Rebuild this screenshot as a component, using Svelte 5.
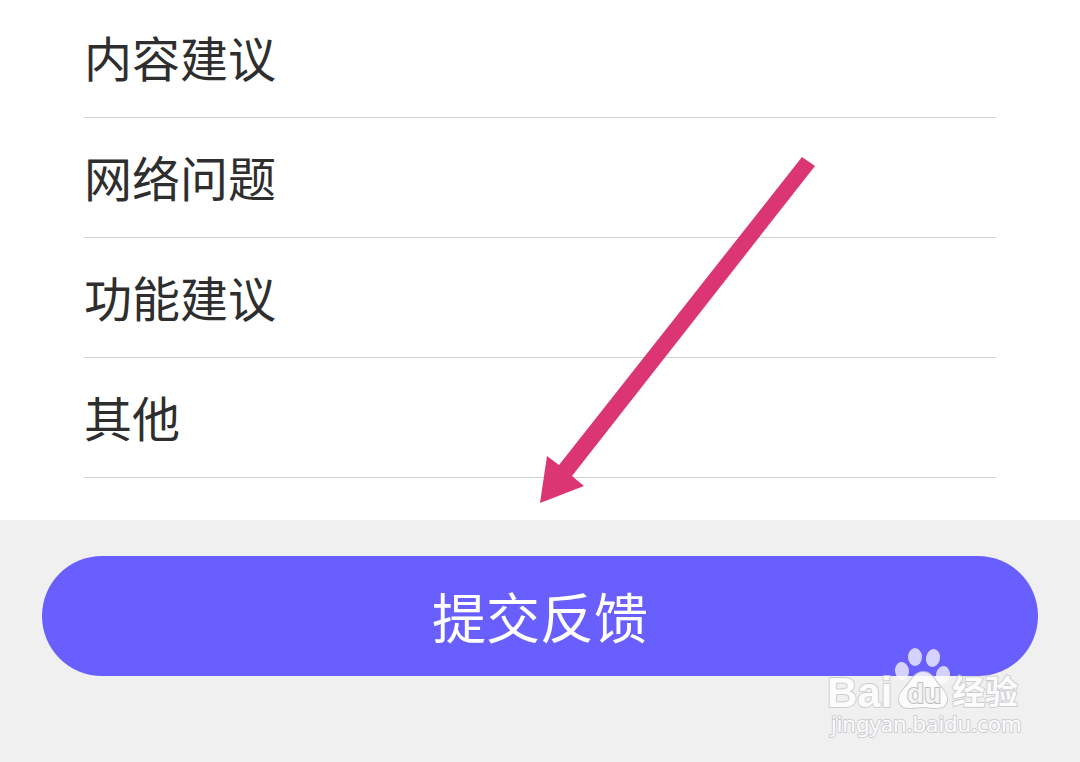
<script>
  const options = ["内容建议", "网络问题", "功能建议", "其他"];

  let selected = $state("");
</script>

<main class="page">
  <ul class="options">
    {#each options as option}
      <li>
        <button
          type="button"
          class="option"
          aria-pressed={selected === option}
          onclick={() => (selected = option)}
        >
          {option}
        </button>
      </li>
    {/each}
  </ul>

  <footer class="footer">
    <button type="button" class="submit">提交反馈</button>
  </footer>

  <svg class="arrow" width="276" height="348" viewBox="0 0 276 348" aria-hidden="true">
    <path d="M0 346 L7 299 L19 308 L262 0 L275 9 L32 319 L44 329 Z" />
  </svg>

  <svg class="watermark" width="200" height="100" viewBox="0 0 200 100">
    <g class="toes">
      <ellipse cx="76" cy="31" rx="7" ry="9" transform="rotate(-8 76 31)" />
      <ellipse cx="89" cy="17" rx="7" ry="9" />
      <ellipse cx="107" cy="18" rx="7" ry="9" transform="rotate(12 107 18)" />
      <ellipse cx="117" cy="35" rx="7" ry="9" transform="rotate(8 117 35)" />
    </g>
    <g class="mark">
      <text class="brand" x="1" y="67" font-size="42">Bai</text>
      <path
        d="M97 32 C104 32 107 37 111 43 C116 49 121 53 121 59 C121 66 116 68 110 68 C105 68 102 67 97 67 C92 67 89 68 83 68 C77 68 73 65 73 59 C73 53 78 49 83 43 C87 38 90 32 97 32 Z"
      />
      <text class="du" x="81" y="63" font-size="28">du</text>
      <text class="cjk" x="126" y="64" font-size="33">经验</text>
      <text class="url" x="5" y="92" font-size="22">jingyan.baidu.com</text>
    </g>
  </svg>
</main>

<style>
  :global(body) {
    margin: 0;
    background: #f0f0f1;
  }

  .page {
    position: relative;
    min-height: 100vh;
    display: flex;
    flex-direction: column;
    overflow: hidden;
    font-family: "Noto Sans CJK SC", sans-serif;
  }

  .options {
    margin: 0;
    padding: 0 84px 42px;
    list-style: none;
    background: #fff;
  }

  .option {
    display: block;
    width: 100%;
    padding: 22px 0 25px;
    border: 0;
    border-bottom: 1px solid #cdd3d6;
    background: none;
    color: #2e2e2e;
    font: inherit;
    font-size: 48px;
    line-height: 72px;
    text-align: left;
    cursor: pointer;
  }

  li:first-child .option {
    padding-top: 20px;
  }

  .footer {
    flex: 1;
    padding: 36px 42px;
    background: #f0f0f1;
  }

  .submit {
    display: block;
    width: 100%;
    height: 120px;
    padding: 0;
    border: 0;
    border-radius: 60px;
    background: #695fff;
    color: #fff;
    font: inherit;
    font-size: 54px;
    line-height: 80px;
    cursor: pointer;
  }

  .arrow {
    position: absolute;
    top: 157px;
    left: 50%;
    fill: #dc3574;
    pointer-events: none;
  }

  .watermark {
    position: absolute;
    right: 54px;
    bottom: 22px;
    pointer-events: none;
  }

  .toes {
    fill: #fff;
    opacity: 0.72;
  }

  .mark {
    fill: #fff;
    stroke: #c8c8cc;
    stroke-width: 2px;
    stroke-linejoin: round;
    paint-order: stroke;
    opacity: 0.85;
  }

  .brand {
    font-family: "Liberation Sans", sans-serif;
    font-weight: 700;
  }

  .du {
    font-family: "Liberation Sans", sans-serif;
    font-weight: 700;
    fill: #f4f4f4;
    stroke: #b4b4b8;
  }

  .cjk {
    font-family: "Noto Sans CJK SC", sans-serif;
    font-weight: 700;
  }

  .url {
    font-family: "Noto Sans", sans-serif;
  }
</style>
